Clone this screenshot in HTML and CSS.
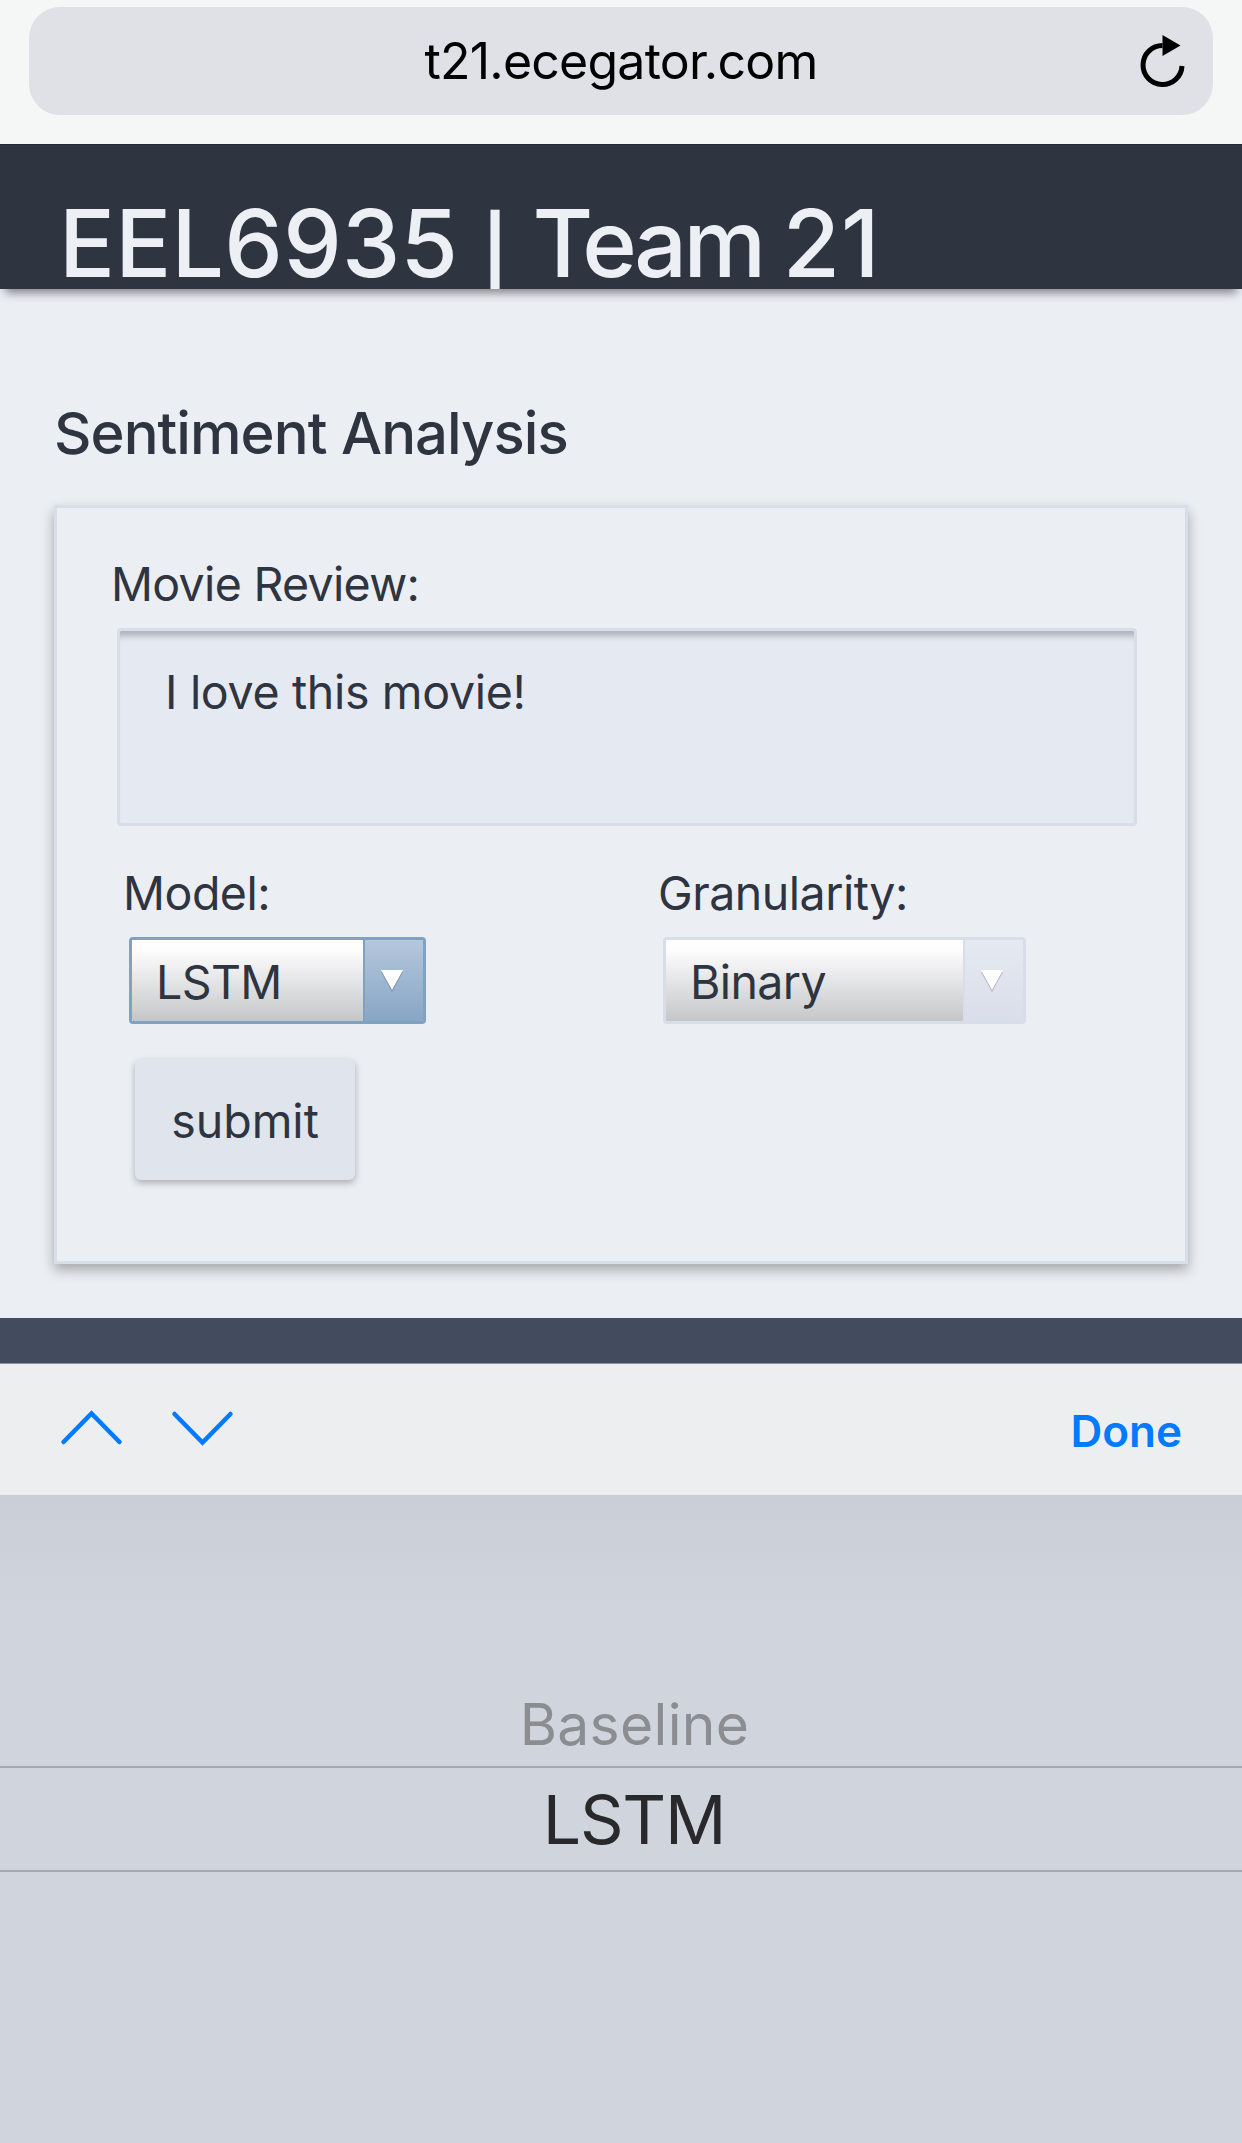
FILE: index.html
```html
<!DOCTYPE html>
<html lang="en">
<head>
<meta charset="utf-8">
<title>EEL6935 | Team 21</title>
<link rel="stylesheet" href="styles.css">
</head>
<body>
<div class="browser-bar">
  <div class="address">
    <span class="url">t21.ecegator.com</span>
    <svg class="reload" width="50" height="60" viewBox="0 0 50 60"><path d="M24.5 15.5A19.5 19.5 0 1 0 44 36" fill="none" stroke="#000" stroke-width="5"/><path d="M24.500 5L42.500 15.500L24.500 26Z"/></svg>
  </div>
</div>
<header class="site-header"><h1 class="site-title">EEL6935 <span class="bar">|</span> <span class="team">Team <span class="number">21</span></span></h1></header>
<main class="content">
  <h2 class="section-title">Sentiment Analysis</h2>
  <form class="card">
    <label class="label label-review">Movie Review:</label>
    <div class="review">I love this movie!</div>
    <div class="options">
      <div class="option option-model">
        <label class="label">Model:</label>
        <div class="select select-active">
          <span class="value">LSTM</span>
          <span class="arrow"><svg width="22" height="22" viewBox="0 0 22 22"><path d="M0 2H22L11 22Z" fill="#000" opacity=".2"/><path d="M0 0H22L11 20Z" fill="#fff"/></svg></span>
        </div>
      </div>
      <div class="option option-granularity">
        <label class="label">Granularity:</label>
        <div class="select">
          <span class="value">Binary</span>
          <span class="arrow"><svg width="22" height="22" viewBox="0 0 22 22"><path d="M0 2H22L11 22Z" fill="#000" opacity=".2"/><path d="M0 0H22L11 20Z" fill="#fff"/></svg></span>
        </div>
      </div>
    </div>
    <button class="submit" type="button">submit</button>
  </form>
</main>
<footer class="site-footer"></footer>
<nav class="form-nav">
  <svg class="chevrons" width="180" height="40" viewBox="0 0 180 40" fill="none" stroke="#007aff" stroke-width="4.500" stroke-linecap="round"><path d="M3.500 34L31.500 5.500L59.500 34M114.500 6L142.500 34.500L170.500 6"/></svg>
  <span class="done">Done</span>
</nav>
<section class="picker">
  <div class="picker-row picker-prev">Baseline</div>
  <div class="picker-row picker-current">LSTM</div>
</section>
</body>
</html>
```
FILE: styles.css
```css
* { box-sizing: border-box; }

body {
  margin: 0;
  width: 1242px;
  height: 2143px;
  display: flex;
  flex-direction: column;
  overflow: hidden;
  font-family: Inter, "Liberation Sans", sans-serif;
  font-size: 46.5px;
  font-weight: 400;
  color: #2e3440;
  background: #ebeef3;
}

.browser-bar { height: 145px; padding: 7px 29px 0; background: #f5f7f7; border-bottom: 1px solid #262b36; }
.address {
  display: grid;
  grid-template-columns: 1fr auto 1fr;
  align-items: center;
  height: 108px;
  border-radius: 31px;
  background: #e0e1e6;
  color: #000;
}
.url { grid-column: 2; font-size: 50px; line-height: 60px; letter-spacing: -.78px; }
.reload { justify-self: end; margin: 0 25px 2px 0; }

.site-header {
  position: relative;
  height: 144px;
  padding: 50px 0 0 59px;
  overflow: hidden;
  background: #2e3440;
  box-shadow: 0 9px 9px -5px rgba(0, 0, 0, .45);
}
.site-title { margin: 0; font-size: 93px; line-height: 96px; font-weight: 500; letter-spacing: .2px; color: #eceff4; white-space: nowrap; }
.bar { margin: 0 -3px 0 -4px; line-height: 0; vertical-align: -22px; }
.team { margin-left: -1px; letter-spacing: -3.6px; word-spacing: -1px; }
.number { letter-spacing: 1px; }

.content { height: 1029px; padding: 108px 54px 0; }
.section-title { margin: 0 0 36px; font-size: 58px; line-height: 72px; font-weight: 500; letter-spacing: -.95px; white-space: nowrap; }

.card {
  display: flex;
  flex-direction: column;
  height: 759px;
  padding: 48px 48px 0 53px;
  border: 3px solid #d8dee9;
  background: #ebeef3;
  box-shadow: 0 6px 12px rgba(0, 0, 0, .3);
}
.label { display: block; line-height: 56px; letter-spacing: -.5px; white-space: nowrap; }
.label-review { padding-left: 1px; letter-spacing: -.68px; }
.review {
  height: 198px;
  margin: 16px 0 0 7px;
  padding: 33px 45px;
  border: 3px solid #d8dee9;
  border-radius: 4px;
  background: #e5e9f1;
  box-shadow: inset 0 10px 6px -5px rgba(0, 0, 0, .24);
  line-height: 56px;
  letter-spacing: -.33px;
}
.options { display: flex; margin: 39px 0 0 13px; }
.option-model { width: 534px; }
.option-granularity .label { padding-left: 1px; }

.select {
  display: flex;
  width: 363px;
  height: 87px;
  margin: 16px 0 0 6px;
  border: 3px solid #d8dee9;
  border-radius: 4px;
  overflow: hidden;
}
.value {
  flex: 1;
  padding-left: 24px;
  line-height: 85px;
  letter-spacing: -.6px;
  background: linear-gradient(#fff 0%, #fdfdfe 12%, #c5c6c8 100%);
}
.arrow {
  display: flex;
  justify-content: center;
  width: 60px;
  padding: 30px 5px 0 0;
  border-left: 2px solid #d8dee9;
  background: linear-gradient(#e5e9f1, #d9deea);
}
.select-active { width: 297px; border-color: #81a1c1; }
.select-active .arrow { border-color: #81a1c1; background: linear-gradient(#b5c7dc, #87a6c5); }

.submit {
  width: 220px;
  height: 121px;
  margin: 35px 0 0 25px;
  padding: 2px 0 0;
  border: 0;
  border-radius: 6px;
  background: #e0e4ed;
  box-shadow: 0 3px 7px rgba(0, 0, 0, .28);
  font: inherit;
  color: inherit;
}

.site-footer { height: 45px; background: #434c5e; }
.form-nav {
  display: flex;
  justify-content: space-between;
  align-items: center;
  height: 132px;
  padding: 0 60px 0 60px;
  border-top: 1px solid #8c929b;
  background: #edeef0;
}
.chevrons { margin-bottom: 3px; }
.done { font-size: 44px; line-height: 56px; font-weight: 600; color: #007aff; padding-top: 2px; }

.picker {
  flex: 1;
  background: linear-gradient(#c9ced7 0, #d0d4dc 110px);
  padding-top: 194px;
  text-align: center;
}
.picker-prev { height: 77px; padding: 0 0 0 27px; font-size: 57px; line-height: 72px; letter-spacing: .3px; color: #8b8d91; }
.picker-current {
  height: 106px;
  padding-left: 26px;
  border: solid #a6a9ad;
  border-width: 2px 0;
  font-size: 68px;
  line-height: 102px;
  letter-spacing: -1.2px;
  color: #29292b;
}
```
